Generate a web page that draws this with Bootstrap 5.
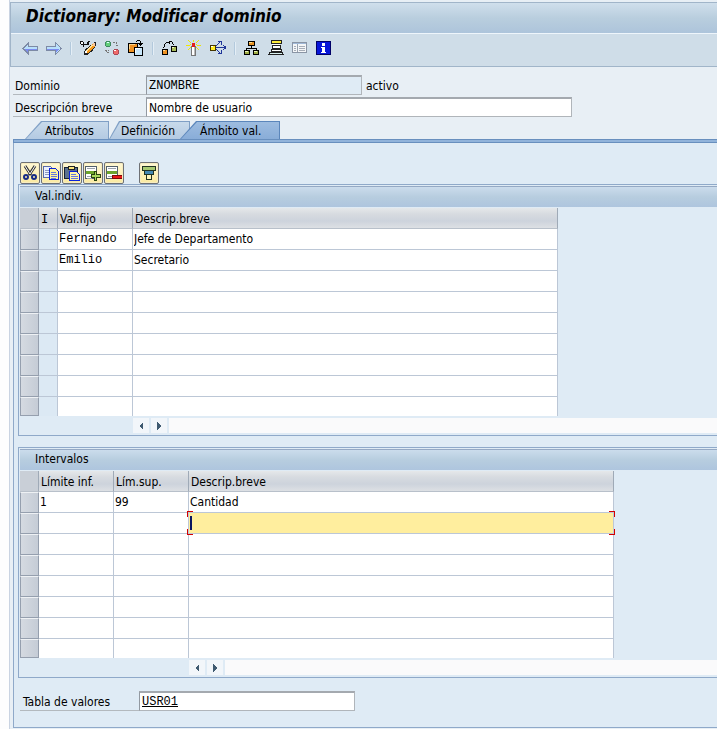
<!DOCTYPE html>
<html lang="es">
<head>
<meta charset="utf-8">
<meta name="viewport" content="width=device-width, initial-scale=1">
<title>Dictionary: Modificar dominio</title>
<link href="https://cdn.jsdelivr.net/npm/bootstrap@5.3.0/dist/css/bootstrap.min.css" rel="stylesheet">
<style>
:root{--line:#8fa9c9;--panel:#dfebf5;--grid:#bcc7d6}
body{background:#fdfdfe;font-family:"DejaVu Sans Condensed","DejaVu Sans",Tahoma,sans-serif;font-size:12px;line-height:16px;color:#000;overflow-x:hidden}
button,input{font:inherit;color:inherit}
svg{display:block;shape-rendering:crispEdges}
.sap-window{margin-left:9px;padding-top:2px;background:#e8eff5;border-left:1px solid #c9d3e2}
.sap-head{border:1px solid #a1b5c9;border-right:0;background:#cfdde8}
.sap-title{height:31px;padding-left:15px;font-size:17px;line-height:27px;font-weight:700;font-style:italic;background:linear-gradient(#d0dfec,#b9cede 50%,#adc4db);border-bottom:1px solid #eef5fb}
.sap-tools{height:32px;padding:0 0 4px 7px}
.sap-tools button{width:24px;height:24px;padding:4px;border:0;background:none}
.tool-sep{width:2px;height:13px;margin:0 4px;background:#b3c9dc;border-right:1px solid #e4eef6}
.sap-form{padding:8px 0 4px 3px;gap:2px}
.field-line{height:20px}
.field-line label{width:133px;height:20px;padding:3px 0 0 2px;border-bottom:1px solid #b3b9be}
.field-line span{padding:3px 0 0 4px}
.sap-input{height:20px;padding:1px 2px 0;border:1px solid #b0b5ba;border-top:2px solid #a4a9af;border-left-color:#9299a1;border-radius:0;background:#fff;outline:0}
.sap-input[readonly]{background:#dfebf5}
.w-short{width:216px}.w-long{width:426px}
.code-font{font-family:"Liberation Mono","Courier New",monospace;font-size:12px}
.sap-tabs{padding-left:15px}
.sap-tab{--slope:16px;position:relative;z-index:0;height:18px;border:0;padding:2px 0 0 20px;text-align:left;line-height:16px;white-space:nowrap;background:#7f9fc5;clip-path:polygon(var(--slope) 0,100% 0,100% 100%,0 100%)}
.sap-tab::before{content:"";position:absolute;z-index:-1;inset:1px 1px 0 1px;background:linear-gradient(#c8daeb,#b4cae2);clip-path:polygon(var(--slope) 0,100% 0,100% 100%,0 100%)}
.tab-a{width:84px}.tab-b{width:81px;--slope:10px;padding-left:12px}
.tab-c{width:100px;margin-left:-10px;background:#5b86bb}
.tab-c::before{background:linear-gradient(#9dbce0,#89add8)}
.sap-panel{margin:0 0 0 3px;padding:19px 0 16px 4px;background:var(--panel);border:1px solid var(--line);border-right:0;border-top:0}
.panel-strip{height:4px;margin-left:3px;background:#91b3da;border:1px solid #688fbe;border-right:0}
.grid-tools{padding-left:2px;gap:1px}
.grid-tools button{width:20px;height:22px;padding:2px 1px;border:1px solid #6e7175;border-radius:2px;background:linear-gradient(#fff8d5,#fbeaa0);box-shadow:inset 0 0 0 1px #f7ecc0}
.grid-tools .apart{margin-left:14px}
.sap-group{border:1px solid var(--line);border-right:0;padding:1px 0 2px 1px}
.group-title{height:21px;padding-left:15px;font-size:12px;line-height:18px;margin:0;font-weight:400;background:linear-gradient(#cbdcec,#b7cddf 50%,#aec5de);border-top:1px solid #95a9c4}
.sap-table{margin-top:1px;border-collapse:separate;border-spacing:0;table-layout:fixed}
.sap-table thead th{height:21px;padding:1px 0 0 2px;font-weight:400;white-space:nowrap;background:linear-gradient(#e5e8ea,#d7dbe0 30%,#cdd3dc 65%,#dde0e4);border-right:1px solid #9faab7;border-bottom:1px solid #b8c0ca}
.sap-table thead th:first-child{background:#c9cfd7}
.sap-table thead th.flag-head{font-family:"DejaVu Sans Mono",monospace}
.sap-table tbody td{height:21px;padding:0;background:#fff;border-right:1px solid var(--grid);border-bottom:1px solid var(--grid)}
.sap-table tbody th{height:21px;padding:0;background:linear-gradient(90deg,#d5dae1,#c5ccd6);border:1px solid #959fae;border-top-color:#eef1f4}
.sap-table tbody tr:last-child td{height:19px;border-bottom:0}
.sap-table tbody tr:last-child th{height:19px}
.sap-table td input{display:block;width:100%;height:19px;padding:0 0 0 1px;border:0;background:none;outline:0}
.sap-table tbody td.flag-cell{background:#dce9f4}
.c-sel{width:19px}.c-flag{width:19px}.c-val{width:75px}.c-desc{width:425px}
.sap-table tbody td.focus-cell{position:relative;background:#ffee9e}
.focus-cell::before{content:"";position:absolute;left:1px;top:3px;width:2px;height:14px;background:#0a1660}
.focus-mark{position:absolute;width:6px;height:6px;border:0 solid #d40000}
.m-tl{left:-2px;top:-2px;border-width:1px 0 0 1px}.m-tr{right:-2px;top:-2px;border-width:1px 1px 0 0}
.m-bl{left:-2px;bottom:-2px;border-width:0 0 1px 1px}.m-br{right:-2px;bottom:-2px;border-width:0 1px 1px 0}
.scroll-line{height:15px;margin-top:2px;gap:2px}
.scroll-line button{width:16px;height:15px;padding:2px 3px;border:0;background:#f2f6fa}
.scroll-track{background:#fafafb}
.from-desc-a{padding-left:113px}.from-desc-b{padding-left:169px}
.group-gap{margin-top:11px}
.value-line{padding-left:2px;margin-top:13px}
.value-line label{width:119px;padding-left:3px}
</style>
<script src="https://cdn.jsdelivr.net/npm/bootstrap@5.3.0/dist/js/bootstrap.bundle.min.js"></script>
</head>
<body>
<div class="sap-window min-vh-100">
<header class="sap-head">
<h1 class="sap-title m-0">Dictionary: Modificar dominio</h1>
<div class="sap-tools d-flex align-items-center" role="toolbar" aria-label="Funciones">
<button type="button" aria-label="Atrás"><svg width="16" height="16" viewBox="0 0 16 16"><path d="M0 8l7-6v4h9v5H7v4L0 9z" fill="#7d8aa5"/><path d="M2 8l4-4v3h9v3H6v3L2 9z" fill="#b9e0fb"/><path d="M3 9h12v1H6v3z" fill="#7c8cf0"/></svg></button>
<button type="button" aria-label="Adelante"><svg width="16" height="16" viewBox="0 0 16 16"><path d="M16 8L9 2v4H0v5h9v4l7-6z" fill="#7d8aa5"/><path d="M14 8l-4-4v3H1v3h9v3l4-4z" fill="#b9e0fb"/><path d="M13 9H1v1h9v3z" fill="#7c8cf0"/></svg></button>
<span class="tool-sep"></span>
<button type="button" aria-label="Visualizar o modificar"><svg width="16" height="16" viewBox="0 0 16 16"><path d="M0 1h3v1h1v2h3V2h1V1h2v1H9v3H4v2H3V5H1V4H0z" fill="#111"/><path d="M1 2h2v2H1z" fill="#fff"/><path d="M14 2h2v4h-1v2h-1v1h-1v2h-1v1h-2v1H9v1H8v1H4v-4h1V9h1V8h2V7h1V6h1V5h2V4h1V3h1z" fill="#222"/><path d="M12 4l3 2-7 8-3-3z" fill="#f79a1a"/><path d="M11 5h2L7 11H5z" fill="#ffe2a0"/><path d="M5 11h2v2H5z" fill="#fff"/><path d="M13 3h2v3h-2z" fill="#f8c8a0"/></svg></button>
<button type="button" aria-label="Activo o inactivo"><svg width="16" height="16" viewBox="0 0 16 16"><path d="M2 1h4v1h1v4H6v1H2V6H1V2h1z" fill="#3f8a61"/><path d="M2 2h4v4H2z" fill="#62ce7a"/><path d="M3 2h2v1H3z" fill="#dff"/><path d="M10 9h4v1h1v4h-1v1h-4v-1H9v-4h1z" fill="#a94856"/><path d="M10 10h4v4h-4z" fill="#f06a6a"/><path d="M10 10h2v1h-2z" fill="#fff"/><path d="M9 2.500h3.500v3M14 5.500h-3M2.500 10v2.500H6M1 10.500h4" fill="none" stroke="#777" stroke-dasharray="2 1"/></svg></button>
<button type="button" aria-label="Otro objeto"><svg width="16" height="16" viewBox="0 0 16 16"><path d="M0 3h10v10H0z"/><path d="M1 4h8v8H1z" fill="#ef9223"/><path d="M1 4h6v1H2v4H1z" fill="#ffd58a"/><path d="M6 7h9v9H6z"/><path d="M7 8h7v7H7z" fill="#c8e7fb"/><path d="M7 8h5v1H8v4H7z" fill="#fff"/><path d="M9 0h3v1h1v2h2v1h-1v1h-1v1h-1V5h-1V4h-1V3h2V1H9v1H8V1h1z"/></svg></button>
<span class="tool-sep"></span>
<button type="button" aria-label="Copiar versión"><svg width="16" height="16" viewBox="0 0 16 16"><path d="M0 9h6v6H0zM9 6h6v6H9z"/><path d="M1 10h4v4H1z" fill="#ef9223"/><path d="M1 10h2v1H1z" fill="#ffe0a0"/><path d="M10 7h4v4h-4z" fill="#a8bb58"/><path d="M10 7h2v1h-2z" fill="#eef5bb"/><path d="M1 7h1V4h1V3h1V2h4v1H4v1H3v3H2v1H1zM7 1h3v1h1v2h1v1h-1V4h-1V2H8v2H7z"/></svg></button>
<button type="button" aria-label="Activar"><svg width="16" height="16" viewBox="0 0 16 16"><path d="M5 6h5v10H5z" fill="#777"/><path d="M6 6h3v9H6z" fill="#fff"/><path d="M8 6h1v9H8z" fill="#bbb"/><path d="M6 3h3v4H6z" fill="#e32119"/><path d="M7 0h1v2H7zM2 0h1v1H2zM3 1h1v1H3zM4 2h1v1H4zM12 0h1v1h-1zM11 1h1v1h-1zM10 2h1v1h-1zM0 5h4v1H0zM11 5h4v1h-4zM4 7h1v1H4zM3 8h1v1H3zM2 9h1v1H2zM10 7h1v1h-1zM11 8h1v1h-1zM12 9h1v1h-1zM4 4h1v1H4zM10 4h1v1h-1z" fill="#efe700"/></svg></button>
<button type="button" aria-label="Lista de utilizaciones"><svg width="16" height="16" viewBox="0 0 16 16"><path d="M0 5h6v6H0z" fill="#443500"/><path d="M1 6h4v4H1z" fill="#ffec24"/><path d="M1 6h2v1H1z" fill="#fff"/><path d="M6 7.500h9M6 6l5-5M6 9l5 5M8 1.500h3.500V5M8 13.500h3.500V10M13 5l3 2.500-3 2.500" fill="none" stroke="#203599"/></svg></button>
<span class="tool-sep"></span>
<button type="button" aria-label="Jerarquía"><svg width="16" height="16" viewBox="0 0 16 16"><path d="M4 1h7v5H4zM0 10h6v5H0zM9 10h6v5H9zM7 6h1v2h5v2h-1V9H3v1H2V8h5z"/><path d="M5 2h5v3H5z" fill="#e99427"/><path d="M5 2h3v1H5z" fill="#ffe28b"/><path d="M1 11h4v3H1zM10 11h4v3h-4z" fill="#9eac45"/><path d="M1 11h3v1H1zM10 11h3v1h-3z" fill="#eef5bb"/></svg></button>
<button type="button" aria-label="Pila de objetos"><svg width="16" height="16" viewBox="0 0 16 16"><path d="M3 0h11v4H3zM4 5h9v4H4zM3 9h11v3H3zM1 12h14v3H1zM0 14h16v1H0z" fill="#222"/><path d="M4 1h9v2H4z" fill="#ffed3d"/><path d="M4 4h8v1H4zM5 6h7v2H5zM4 10h9v1H4z" fill="#fff"/><path d="M2 13h12v1H2z" fill="#d9f0ef"/></svg></button>
<button type="button" aria-label="Lista"><svg width="16" height="16" viewBox="0 0 16 16"><path d="M0 2h15v11H0z" fill="#8a95a5"/><path d="M1 3h13v9H1z" fill="#f4f6f8"/><path d="M1 3h13v1H1z" fill="#9fb8d7"/><path d="M2 6h2v1H2zM2 8h2v1H2zM2 10h2v1H2zM7 6h6v1H7zM7 8h6v1H7zM7 10h6v1H7z" fill="#a6adb8"/><path d="M5 4h1v8H5z" fill="#9aa4b0"/></svg></button>
<button type="button" aria-label="Información"><svg width="16" height="16" viewBox="0 0 16 16"><path d="M0 1h15v14H0z" fill="#000068"/><path d="M1 2h13v12H1z" fill="#0716d9"/><path d="M6 3h3v3H6zM5 7h4v5h1v1H5v-1h1V8H5z" fill="#fff"/></svg></button>
</div>
</header>
<main>
<form class="sap-form d-flex flex-column">
<div class="field-line d-flex"><label for="dominio">Dominio</label><input id="dominio" class="sap-input w-short code-font" value="ZNOMBRE" readonly><span>activo</span></div>
<div class="field-line d-flex"><label for="descr">Descripción breve</label><input id="descr" class="sap-input w-long" value="Nombre de usuario"></div>
</form>
<div class="sap-tabs d-flex" role="tablist">
<button type="button" role="tab" class="sap-tab tab-a">Atributos</button>
<button type="button" role="tab" class="sap-tab tab-b">Definición</button>
<button type="button" role="tab" aria-selected="true" class="sap-tab tab-c">Ámbito val.</button>
</div>
<div class="panel-strip"></div>
<section class="sap-panel" role="tabpanel">
<div class="grid-tools d-flex">
<button type="button" aria-label="Cortar"><svg width="16" height="16" viewBox="0 0 16 16"><g fill="none" shape-rendering="auto"><path d="M3 1l6 9M13 1L7 10" stroke="#333" stroke-width="3"/><path d="M3 1l5 8M13 1L8 9" stroke="#fff"/><circle cx="4" cy="12" r="2" stroke="#182c87" stroke-width="2"/><circle cx="12" cy="12" r="2" stroke="#182c87" stroke-width="2"/></g></svg></button>
<button type="button" aria-label="Copiar"><svg width="16" height="16" viewBox="0 0 16 16"><path d="M.5 1.500h7l2 2v9h-9z" fill="#eaf0ff" stroke="#596ba9"/><path d="M2 5h5M2 7h5M2 9h5" stroke="#8b97bd"/><path d="M6.500 3.500h6l3 3v8h-9z" fill="#fff39d" stroke="#0b22d8"/><path d="M8 7h5M8 9h6M8 11h6M8 13h5" stroke="#6479df"/></svg></button>
<button type="button" aria-label="Pegar"><svg width="16" height="16" viewBox="0 0 16 16"><path d="M.5 2.500h13v11H.5z" fill="#5b718f" stroke="#172333"/><path d="M4 1h6v3H4z" fill="#ffe87e" stroke="#222"/><path d="M5.500 6.500h7l3 3v6h-10z" fill="#fff6a5" stroke="#0b22d8"/><path d="M7 9h5M7 11h7M7 13h7" stroke="#6479df"/></svg></button>
<button type="button" aria-label="Insertar línea"><svg width="16" height="16" viewBox="0 0 16 16"><path d="M.5 1.500h11v12H.5z" fill="#fff" stroke="#53606a"/><path d="M2 3h8M2 11h6M2 13h5" stroke="#9aa2aa"/><path d="M1 6h10v3H1z" fill="#6da42c"/><path d="M9 6h3v3h4v4h-4v3H9v-3H6V9h3z" fill="#28420f"/><path d="M10 7h1v3h4v2h-4v3h-1v-3H7v-2h3z" fill="#a9d85e"/></svg></button>
<button type="button" aria-label="Borrar línea"><svg width="16" height="16" viewBox="0 0 16 16"><path d="M.5 1.500h11v12H.5z" fill="#fff" stroke="#53606a"/><path d="M2 3h8M2 11h6" stroke="#9aa2aa"/><path d="M1 6h10v3H1z" fill="#6da42c"/><path d="M6 10h10v4H6z" fill="#7e0808"/><path d="M7 11h9v2H7z" fill="#e91717"/></svg></button>
<button type="button" class="apart" aria-label="Filtrar"><svg width="16" height="16" viewBox="0 0 16 16"><path d="M1 1h14v5H1zM3 6h10v4H3zM5 10h6v5H5z" fill="#213322"/><path d="M2 2h12v3H2z" fill="#a6c971"/><path d="M4 6h8v3H4z" fill="#4488b4"/><path d="M6 10h4v4H6z" fill="#fff5bd"/></svg></button>
</div>
<section class="sap-group">
<h2 class="group-title">Val.indiv.</h2>
<table class="sap-table">
<colgroup><col class="c-sel"><col class="c-flag"><col class="c-val"><col class="c-desc"></colgroup>
<thead><tr><th></th><th class="flag-head">I</th><th>Val.fijo</th><th>Descrip.breve</th></tr></thead>
<tbody>
<tr><th></th><td class="flag-cell"></td><td><input class="code-font" aria-label="Valor fijo" value="Fernando"></td><td><input aria-label="Descripción" value="Jefe de Departamento"></td></tr>
<tr><th></th><td class="flag-cell"></td><td><input class="code-font" aria-label="Valor fijo" value="Emilio"></td><td><input aria-label="Descripción" value="Secretario"></td></tr>
<tr><th></th><td class="flag-cell"></td><td><input aria-label="Valor fijo"></td><td><input aria-label="Descripción"></td></tr>
<tr><th></th><td class="flag-cell"></td><td><input aria-label="Valor fijo"></td><td><input aria-label="Descripción"></td></tr>
<tr><th></th><td class="flag-cell"></td><td><input aria-label="Valor fijo"></td><td><input aria-label="Descripción"></td></tr>
<tr><th></th><td class="flag-cell"></td><td><input aria-label="Valor fijo"></td><td><input aria-label="Descripción"></td></tr>
<tr><th></th><td class="flag-cell"></td><td><input aria-label="Valor fijo"></td><td><input aria-label="Descripción"></td></tr>
<tr><th></th><td class="flag-cell"></td><td><input aria-label="Valor fijo"></td><td><input aria-label="Descripción"></td></tr>
<tr><th></th><td class="flag-cell"></td><td></td><td></td></tr>
</tbody>
</table>
<div class="scroll-line d-flex from-desc-a">
<button type="button" aria-label="Izquierda"><svg width="10" height="10" viewBox="0 0 10 10"><path d="M7 1v8L3 5z" fill="#3f5a70"/></svg></button>
<button type="button" aria-label="Derecha"><svg width="10" height="10" viewBox="0 0 10 10"><path d="M3 1v8l4-4z" fill="#3f5a70"/></svg></button>
<div class="scroll-track flex-grow-1"></div>
</div>
</section>
<section class="sap-group group-gap">
<h2 class="group-title">Intervalos</h2>
<table class="sap-table">
<colgroup><col class="c-sel"><col class="c-val"><col class="c-val"><col class="c-desc"></colgroup>
<thead><tr><th></th><th>Límite inf.</th><th>Lím.sup.</th><th>Descrip.breve</th></tr></thead>
<tbody>
<tr><th></th><td><input aria-label="Límite inferior" value="1"></td><td><input aria-label="Límite superior" value="99"></td><td><input aria-label="Descripción" value="Cantidad"></td></tr>
<tr><th></th><td><input aria-label="Límite inferior"></td><td><input aria-label="Límite superior"></td><td class="focus-cell"><input aria-label="Descripción"><i class="focus-mark m-tl"></i><i class="focus-mark m-tr"></i><i class="focus-mark m-bl"></i><i class="focus-mark m-br"></i></td></tr>
<tr><th></th><td><input aria-label="Límite inferior"></td><td><input aria-label="Límite superior"></td><td><input aria-label="Descripción"></td></tr>
<tr><th></th><td><input aria-label="Límite inferior"></td><td><input aria-label="Límite superior"></td><td><input aria-label="Descripción"></td></tr>
<tr><th></th><td><input aria-label="Límite inferior"></td><td><input aria-label="Límite superior"></td><td><input aria-label="Descripción"></td></tr>
<tr><th></th><td><input aria-label="Límite inferior"></td><td><input aria-label="Límite superior"></td><td><input aria-label="Descripción"></td></tr>
<tr><th></th><td><input aria-label="Límite inferior"></td><td><input aria-label="Límite superior"></td><td><input aria-label="Descripción"></td></tr>
<tr><th></th><td></td><td></td><td></td></tr>
</tbody>
</table>
<div class="scroll-line d-flex from-desc-b">
<button type="button" aria-label="Izquierda"><svg width="10" height="10" viewBox="0 0 10 10"><path d="M7 1v8L3 5z" fill="#3f5a70"/></svg></button>
<button type="button" aria-label="Derecha"><svg width="10" height="10" viewBox="0 0 10 10"><path d="M3 1v8l4-4z" fill="#3f5a70"/></svg></button>
<div class="scroll-track flex-grow-1"></div>
</div>
</section>
<div class="value-line field-line d-flex"><label for="tabla">Tabla de valores</label><input id="tabla" class="sap-input w-short code-font text-decoration-underline" value="USR01"></div>
</section>
</main>
</div>
</body>
</html>
